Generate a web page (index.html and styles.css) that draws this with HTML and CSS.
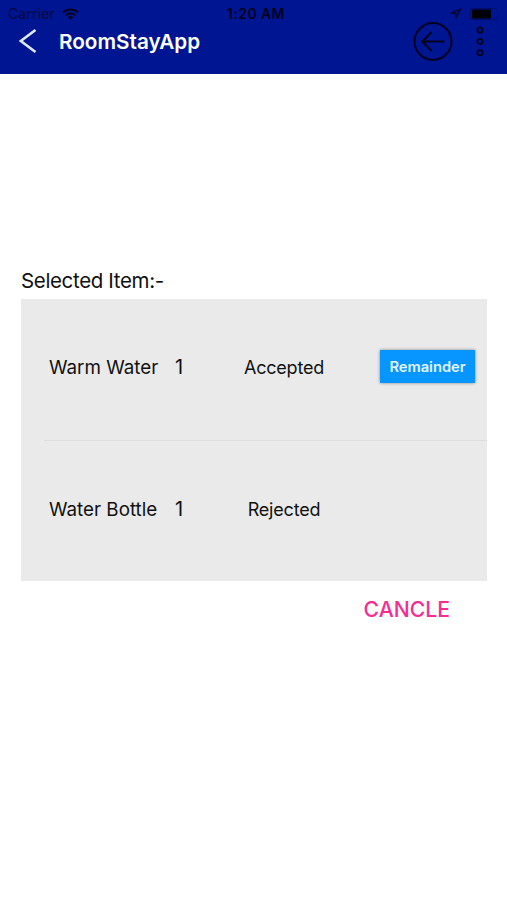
FILE: index.html
```html
<!DOCTYPE html>
<html lang="en">
<head>
  <meta charset="UTF-8">
  <meta name="viewport" content="width=device-width, initial-scale=1.0">
  <title>RoomStayApp</title>
  <link rel="stylesheet" href="styles.css">
</head>
<body>

  <header class="header">
    <!-- Status bar -->
    <div class="status-bar">
      <div class="status-left">
        <span class="carrier">Carrier</span>
        <svg class="wifi" width="17" height="12" viewBox="0 0 16 12" preserveAspectRatio="none" fill="none" stroke="#00031f" stroke-width="2.2">
          <path d="M1 4.3a10.2 10.2 0 0 1 14 0"/>
          <path d="M3.6 7.2a6.4 6.4 0 0 1 8.8 0"/>
          <path d="M8 11.8L5.5 9.3a3.6 3.6 0 0 1 5 0z" fill="#00031f" stroke="none"/>
        </svg>
      </div>
      <span class="time">1:20 AM</span>
      <div class="status-right">
        <svg width="12" height="11" viewBox="0 0 12 11" fill="none" stroke="#00052f" stroke-width="1.4">
          <path d="M1 5.2L10.5 1.2L6.3 9L5.8 5.4z"/>
        </svg>
        <svg width="31" height="12" viewBox="0 0 31 12">
          <rect x="0.5" y="0.5" width="27" height="11" rx="2.5" fill="none" stroke="#000d65"/>
          <rect x="2" y="1.5" width="19" height="9" rx="1" fill="#000006"/>
          <path d="M29 4q1.8 2 0 4z" fill="#000d65"/>
        </svg>
      </div>
    </div>

    <!-- Navigation -->
    <div class="nav">
      <svg class="back" width="18" height="24" viewBox="0 0 18 24" fill="none" stroke="#dfe7ff" stroke-width="2.6">
        <path d="M16.5 1L1.8 12L16.5 23"/>
      </svg>
      <h1 class="title">RoomStayApp</h1>
      <svg class="circle-arrow" width="40" height="40" viewBox="0 0 40 40" fill="none" stroke="#00031f" stroke-width="2">
        <circle cx="20" cy="20.5" r="18.5"/>
        <path d="M31.5 20.5H9.5M18.5 11.3L9.2 20.5L18.5 29.7"/>
      </svg>
      <svg class="dots" width="10" height="30" viewBox="0 0 10 30" fill="none" stroke="#00031f" stroke-width="1.8">
        <circle cx="5" cy="4" r="2.6"/>
        <circle cx="5" cy="15.4" r="2.6"/>
        <circle cx="5" cy="26.7" r="2.6"/>
      </svg>
    </div>
  </header>

  <main class="content">
    <h2 class="label">Selected Item:-</h2>
    <div class="list">
      <div class="item">
        <span class="name">Warm Water</span>
        <span class="qty">1</span>
        <span class="state">Accepted</span>
        <button class="remainder-btn">Remainder</button>
      </div>
      <div class="separator"></div>
      <div class="item">
        <span class="name">Water Bottle</span>
        <span class="qty">1</span>
        <span class="state">Rejected</span>
      </div>
    </div>
    <button class="cancel-btn">CANCLE</button>
  </main>

</body>
</html>
```
FILE: styles.css
```css
* {
  box-sizing: border-box;
}

body {
  margin: 0;
  background: #fff;
  color: #111;
  font-family: Inter, "Liberation Sans", sans-serif;
}

button {
  border: none;
  padding: 0;
  font-family: inherit;
  cursor: pointer;
}

.header {
  height: 74px;
  background: #001591;
}

.status-bar {
  display: grid;
  grid-template-columns: 1fr auto 1fr;
  align-items: center;
  height: 27px;
  padding: 0 6px 0 8px;
  font-size: 14px;
  color: #00031f;
}

.status-left,
.status-right {
  display: flex;
  align-items: center;
}

.status-left {
  gap: 7px;
}

.carrier {
  color: #00083f;
  letter-spacing: 0.1px;
}

.time {
  margin-left: 3px;
  font-weight: 600;
  letter-spacing: 0.4px;
}

.status-right {
  justify-content: flex-end;
  gap: 8px;
}

.nav {
  display: flex;
  align-items: center;
  height: 28px;
  padding: 0 22px 0 19px;
}

.title {
  flex: 1;
  margin: 0 0 0 22px;
  font-size: 20.7px;
  font-weight: 600;
  color: #fff;
}

.circle-arrow {
  flex: none;
  margin-right: 22px;
}

.content {
  display: flex;
  flex-direction: column;
  padding: 193px 20px 0 21px;
}

.label {
  margin: 0;
  height: 32px;
  font-size: 20.5px;
  line-height: 28px;
  letter-spacing: -0.35px;
  font-weight: 400;
}

.list {
  height: 282px;
  background: #eaeaea;
}

.item {
  display: grid;
  grid-template-columns: 110px 40px 170px 1fr;
  align-items: center;
  height: 142px;
  padding: 0 12px 6px 28px;
}

.name {
  font-size: 18.8px;
  white-space: nowrap;
}

.qty {
  text-align: center;
  font-size: 20px;
}

.state {
  text-align: center;
  font-size: 18px;
  letter-spacing: -0.2px;
}

.separator {
  height: 1px;
  margin: -1px 0 0 23px;
  background: #dedede;
}

.remainder-btn {
  justify-self: end;
  width: 95px;
  height: 33px;
  margin-bottom: 1px;
  background: #0795ff;
  box-shadow: 0 0 3px rgba(0, 0, 0, 0.45);
  color: #e2f5ff;
  font-size: 14.7px;
  font-weight: 600;
}

.cancel-btn {
  align-self: flex-end;
  margin: 14px 37px 0 0;
  background: none;
  color: #f52d93;
  font-size: 21.2px;
  line-height: 28px;
  font-weight: 550;
}
```
